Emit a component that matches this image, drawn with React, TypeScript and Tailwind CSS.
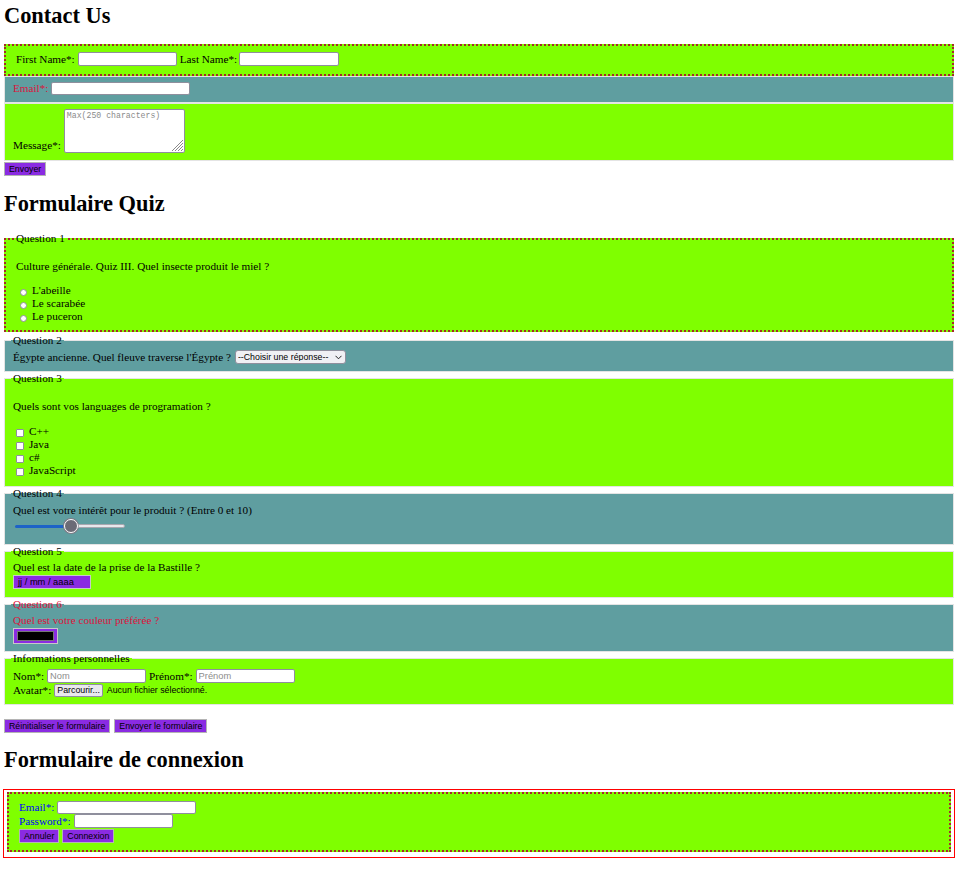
import React from "react";

const control =
  "box-border rounded-[2px] border border-[#8f8f9d] bg-white px-[2px] font-['Liberation_Sans',sans-serif] text-[9.3px] leading-none text-black outline-none placeholder:text-[#8d8d8d]";

const purpleBtn =
  "box-border h-[14px] border border-[#b4b4b4] bg-[#8a2be2] px-[4px] font-['Liberation_Sans',sans-serif] text-[8.8px] leading-[12px] text-black";

const dotted = "border-2 border-dotted border-[#a52a2a] bg-[#7fff00]";
const teal = "border border-[#e4e4e4] bg-[#5f9ea0]";
const green = "border border-[#e4e4e4] bg-[#7fff00]";

function Legend({ children, className = "" }: { children: React.ReactNode; className?: string }) {
  return <legend className={"-ml-[2px] px-[2px] leading-[13px] " + className}>{children}</legend>;
}

function Radio({ name, label }: { name: string; label: string }) {
  return (
    <label className="flex h-[13px] items-start">
      <input
        type="radio"
        name={name}
        className="ml-[4px] mt-[5px] h-[7px] w-[7px] appearance-none rounded-full border border-[#8f8f9d] bg-white"
      />
      <span className="ml-[5px]">{label}</span>
    </label>
  );
}

function Check({ label }: { label: string }) {
  return (
    <label className="flex h-[13px] items-start">
      <input
        type="checkbox"
        className="ml-[3px] mt-[4px] h-[8px] w-[8px] appearance-none rounded-[1px] border border-[#8f8f9d] bg-white"
      />
      <span className="ml-[5px]">{label}</span>
    </label>
  );
}

function Heading({ children, className = "" }: { children: React.ReactNode; className?: string }) {
  return <h1 className={"h-[26px] text-[22.4px] font-bold leading-[26px] " + className}>{children}</h1>;
}

export default function App() {
  return (
    <div className="min-h-[870px] bg-white pl-[4px] pr-[5px] font-['Liberation_Serif',serif] text-[11.2px] leading-[13px] text-black">
      {/* Contact */}
      <Heading className="pt-[3px] box-content">Contact Us</Heading>
      <form className="mt-[15px]">
        <div className={dotted + " pl-[10px] pt-[6px] pb-[8px]"}>
          <div className="flex h-[14px] items-center">
            <span>First Name*:</span>
            <input type="text" className={control + " ml-[3px] h-[14px] w-[99px]"} />
            <span className="ml-[3px]">Last Name*:</span>
            <input type="text" className={control + " ml-[2px] h-[14px] w-[100px]"} />
          </div>
        </div>
        <div className={teal + " pl-[8px] pt-[5px] pb-[7px]"}>
          <div className="flex h-[13px] items-center">
            <span className="text-[#dc143c]">Email*:</span>
            <input type="email" className={control + " ml-[3px] h-[13px] w-[139px]"} />
          </div>
        </div>
        <div className={green + " pl-[8px] pt-[5px] pb-[7px]"}>
          <div className="flex h-[44px] items-end">
            <span className="mb-[1px]">Message*:</span>
            <span className="relative ml-[3px] inline-block h-[44px] w-[121px]">
              <textarea
                placeholder="Max(250 characters)"
                className="box-border h-[44px] w-[121px] resize-none rounded-[2px] border border-[#8f8f9d] bg-white px-[2px] py-[1px] font-['Liberation_Mono',monospace] text-[8.2px] leading-[10px] outline-none placeholder:text-[#8a8a8a]"
              />
              <svg className="absolute bottom-[2px] right-[2px]" width="12" height="12" viewBox="0 0 12 12">
                <g stroke="#8a8a8a" strokeWidth="1">
                  <line x1="12" y1="1" x2="1" y2="12" />
                  <line x1="12" y1="4" x2="4" y2="12" />
                  <line x1="12" y1="7" x2="7" y2="12" />
                  <line x1="12" y1="10" x2="10" y2="12" />
                </g>
              </svg>
            </span>
          </div>
        </div>
        <button type="submit" className={purpleBtn + " mt-[1px] block"}>
          Envoyer
        </button>
      </form>

      {/* Quiz */}
      <Heading className="mt-[15px]">Formulaire Quiz</Heading>
      <form className="mt-[15px]">
        <fieldset className={dotted + " pl-[10px] pt-[15px] pb-[7px]"}>
          <Legend>Question 1</Legend>
          <p>Culture générale. Quiz III. Quel insecte produit le miel ?</p>
          <div className="mt-[11px]">
            <Radio name="q1" label="L'abeille" />
            <Radio name="q1" label="Le scarabée" />
            <Radio name="q1" label="Le puceron" />
          </div>
        </fieldset>

        <fieldset className={teal + " mt-[2px] pl-[8px] pt-[2px] pb-[6px]"}>
          <Legend>Question 2</Legend>
          <div className="flex h-[16px] items-center">
            <span>Égypte ancienne. Quel fleuve traverse l'Égypte ?</span>
            <span className="relative ml-[4px] inline-flex">
              <select className="box-border h-[14px] w-[111px] appearance-none rounded-[3px] border border-[#8f8f9d] bg-[#f0f0f4] pl-[2px] font-['Liberation_Sans',sans-serif] text-[8.8px] leading-none text-black outline-none">
                <option>--Choisir une réponse--</option>
                <option>Le Nil</option>
                <option>Le Tigre</option>
                <option>L'Euphrate</option>
              </select>
              <svg className="pointer-events-none absolute right-[4px] top-[5px]" width="7" height="5" viewBox="0 0 7 5">
                <path d="M0.5 0.8 L3.5 3.8 L6.5 0.8" fill="none" stroke="#222" strokeWidth="1" />
              </svg>
            </span>
          </div>
        </fieldset>

        <fieldset className={green + " pl-[8px] pt-[15px] pb-[9px]"}>
          <Legend>Question 3</Legend>
          <p>Quels sont vos languages de programation ?</p>
          <div className="mt-[12px]">
            <Check label="C++" />
            <Check label="Java" />
            <Check label="c#" />
            <Check label="JavaScript" />
          </div>
        </fieldset>

        <fieldset className={teal + " pl-[8px] pt-[4px] pb-[11px]"}>
          <Legend>Question 4</Legend>
          <p>Quel est votre intérêt pour le produit ? (Entre 0 et 10)</p>
          <div className="ml-[2px] mt-[2px] flex h-[14px] w-[110px] items-center">
            <span className="h-[3px] w-[49px] rounded-l-[2px] bg-[#1d63c8]" />
            <span className="box-border h-[14px] w-[14px] rounded-full border-[1.5px] border-white bg-[#6b6b76] shadow-[0_0_0_1px_#7d7d88]" />
            <span className="box-border h-[4px] flex-1 rounded-r-[2px] border border-[#a8a8b0] bg-[#e8e8ec]" />
          </div>
        </fieldset>

        <fieldset className={green + " pl-[8px] pt-[3px] pb-[8px]"}>
          <Legend>Question 5</Legend>
          <p>Quel est la date de la prise de la Bastille ?</p>
          <div className="mt-[1px] box-border flex h-[14px] w-[78px] items-center border border-[#c8c8c8] bg-[#8a2be2] pl-[4px] font-['Liberation_Sans',sans-serif] text-[9.3px] text-black">
            jj / mm / aaaa
          </div>
        </fieldset>

        <fieldset className={teal + " pl-[8px] pt-[3px] pb-[7px] text-[#dc143c]"}>
          <Legend>Question 6</Legend>
          <p>Quel est votre couleur préférée ?</p>
          <div className="mt-[1px] box-border flex h-[16px] w-[45px] items-center justify-center border border-[#c8c8c8] bg-[#8a2be2]">
            <span className="box-border h-[10px] w-[37px] border border-[#777] bg-black" />
          </div>
        </fieldset>

        <fieldset className={green + " pl-[8px] pt-[4px] pb-[7px]"}>
          <Legend>Informations personnelles</Legend>
          <div className="flex h-[14px] items-center">
            <span>Nom*:</span>
            <input type="text" placeholder="Nom" className={control + " ml-[3px] h-[14px] w-[99px]"} />
            <span className="ml-[3px]">Prénom*:</span>
            <input type="text" placeholder="Prénom" className={control + " ml-[3px] h-[14px] w-[99px]"} />
          </div>
          <div className="flex h-[14px] items-center">
            <span>Avatar*:</span>
            <button
              type="button"
              className="ml-[3px] box-border h-[13px] rounded-[2px] border border-[#8f8f9d] bg-[#e9e9ed] px-[2px] font-['Liberation_Sans',sans-serif] text-[8.8px] leading-[11px] text-black"
            >
              Parcourir...
            </button>
            <span className="ml-[4px] font-['Liberation_Sans',sans-serif] text-[8.8px]">Aucun fichier sélectionné.</span>
          </div>
        </fieldset>

        <div className="mt-[14px] flex gap-[4px]">
          <button type="reset" className={purpleBtn}>
            Réinitialiser le formulaire
          </button>
          <button type="submit" className={purpleBtn}>
            Envoyer le formulaire
          </button>
        </div>
      </form>

      {/* Connexion */}
      <Heading className="mt-[14px]">Formulaire de connexion</Heading>
      <div className="-mx-[1px] mt-[16px] border border-[#ff0000] px-[3px] pt-[2px] pb-[5px]">
        <div className={dotted + " pl-[10px] pt-[6px] pb-[7px] text-[#0000ff]"}>
          <div className="flex h-[14px] items-center">
            <span>Email*:</span>
            <input type="email" className={control + " ml-[3px] h-[13px] w-[139px]"} />
          </div>
          <div className="flex h-[14px] items-center">
            <span>Password*:</span>
            <input type="password" className={control + " ml-[3px] h-[14px] w-[99px]"} />
          </div>
          <div className="mt-[1px] flex gap-[3px]">
            <button type="reset" className={purpleBtn}>
              Annuler
            </button>
            <button type="submit" className={purpleBtn}>
              Connexion
            </button>
          </div>
        </div>
      </div>
    </div>
  );
}
